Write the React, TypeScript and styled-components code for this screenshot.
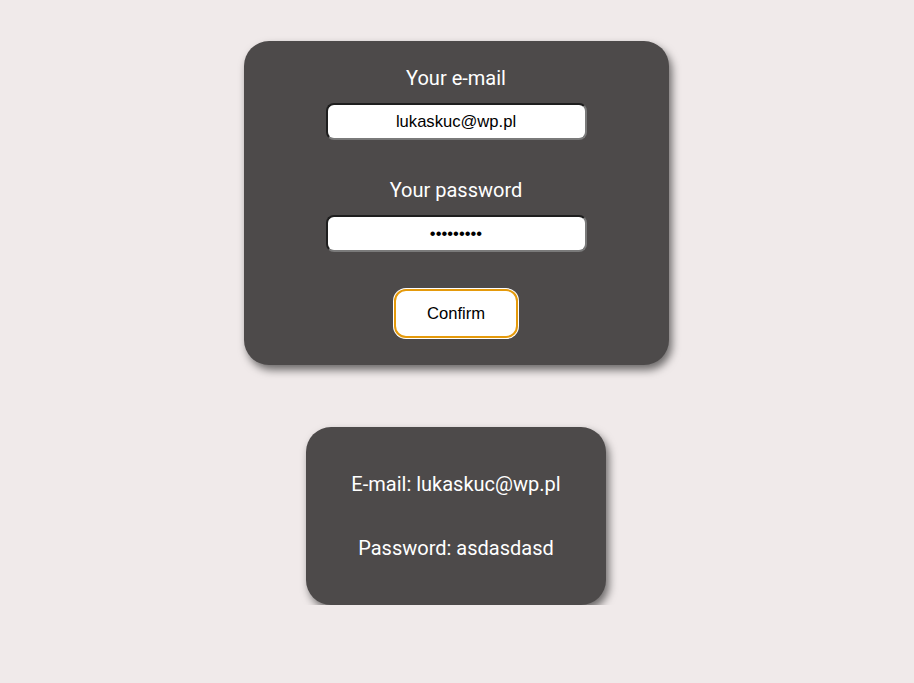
import React, { useState } from "react";
import styled, { createGlobalStyle } from "styled-components";

const GlobalStyle = createGlobalStyle`
    html, body {
        margin: 0;
        padding: 0;
        background: #f0eaea;
        font-family: Roboto, "Liberation Sans", sans-serif;
    }
`;

export default function App() {
    const [email, setEmail] = useState("lukaskuc@wp.pl");
    const [password, setPassword] = useState("asdasdasd");

    return (
        <Page>
            <GlobalStyle />
            <FormCard onSubmit={(e) => e.preventDefault()}>
                <Label htmlFor="email">Your e-mail</Label>
                <Input
                    id="email"
                    type="text"
                    value={email}
                    onChange={(e) => setEmail(e.target.value)}
                />
                <Label htmlFor="password" $spaced>
                    Your password
                </Label>
                <Input
                    id="password"
                    type="password"
                    value={password}
                    onChange={(e) => setPassword(e.target.value)}
                />
                <ConfirmButton type="submit">Confirm</ConfirmButton>
            </FormCard>

            <ResultCard>
                <ResultLine>E-mail: {email}</ResultLine>
                <ResultLine>Password: {password}</ResultLine>
            </ResultCard>
        </Page>
    );
}

const Page = styled.div`
    display: flex;
    flex-direction: column;
    align-items: center;
    padding-top: 41px;
    padding-right: 2px;
    gap: 62px;
`;

const Card = styled.div`
    background: #4d4a4a;
    border-radius: 25px;
    box-shadow: 3px 5px 8px rgba(0, 0, 0, 0.55);
    display: flex;
    flex-direction: column;
    align-items: center;
    box-sizing: border-box;
`;

const FormCard = styled(Card).attrs({ as: "form" })`
    width: 425px;
    padding: 25px 0 27px;
`;

const Label = styled.label<{ $spaced?: boolean }>`
    color: #ffffff;
    font-size: 20px;
    line-height: 24px;
    margin-top: ${(p) => (p.$spaced ? "38px" : "0")};
    margin-bottom: 13px;
`;

const Input = styled.input`
    width: 261px;
    height: 37px;
    box-sizing: border-box;
    border-width: 2px;
    border-style: solid;
    border-color: #1e1e1e #7a7a7a #7a7a7a #1e1e1e;
    border-radius: 8px;
    background: #ffffff;
    text-align: center;
    font-family: "Liberation Sans", Arial, sans-serif;
    font-size: 16.6px;
    color: #000000;
    outline: none;
`;

const ConfirmButton = styled.button`
    margin-top: 37px;
    width: 124px;
    height: 49px;
    box-sizing: border-box;
    background: #ffffff;
    border: 2px solid #e59a0b;
    border-radius: 12px;
    box-shadow: 0 0 0 1px #ffffff;
    font-family: "Liberation Sans", Arial, sans-serif;
    font-size: 16.6px;
    color: #000000;
    cursor: pointer;
`;

const ResultCard = styled(Card)`
    width: 300px;
    padding: 45px 0;
    gap: 40px;
`;

const ResultLine = styled.div`
    color: #ffffff;
    font-size: 20px;
    line-height: 24px;
`;
